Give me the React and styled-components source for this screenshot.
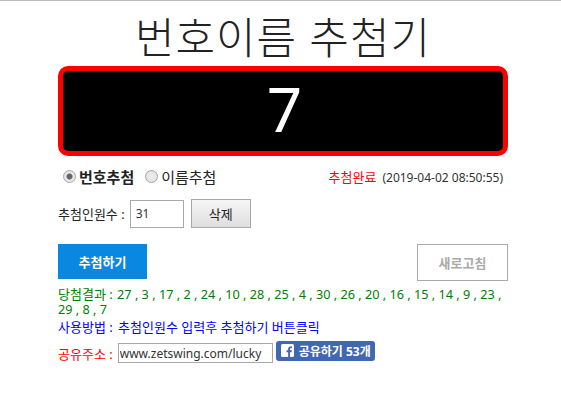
import React from "react";
import styled, { createGlobalStyle } from "styled-components";

const GlobalStyle = createGlobalStyle`
  html, body {
    margin: 0;
    padding: 0;
    background: #fff;
    font-family: "Noto Sans", "Noto Sans CJK KR", sans-serif;
  }
`;

const Page = styled.div`
  border-top: 1px solid #bbb;
  height: 414px;
  width: 561px;
  box-sizing: border-box;
`;

const Wrap = styled.div`
  width: 450px;
  margin-left: 58px;
  display: flex;
  flex-direction: column;
`;

const Title = styled.h1`
  margin: 9px 0 0;
  height: 56px;
  line-height: 56px;
  font-size: 43px;
  font-weight: 300;
  color: #222;
  text-align: center;
  letter-spacing: 1px;
`;

const Display = styled.div`
  box-sizing: border-box;
  height: 90px;
  border: 5px solid #f00;
  border-radius: 10px;
  background: #000;
  color: #fff;
  font-size: 62px;
  line-height: 75px;
  text-align: center;
  padding-left: 3px;
`;

const StatusRow = styled.div`
  display: flex;
  justify-content: space-between;
  align-items: center;
  height: 20px;
  margin-top: 10px;
  padding: 0 5px;
`;

const RadioGroup = styled.div`
  display: flex;
  align-items: center;
`;

const RadioLabel = styled.label`
  display: flex;
  align-items: center;
  gap: 3px;
  margin-right: 11px;
  font-size: 15px;
  color: #222;
  font-weight: ${(p) => (p.$active ? 700 : 400)};
`;

const Radio = styled.input.attrs({ type: "radio", name: "mode" })`
  appearance: none;
  box-sizing: border-box;
  width: 13px;
  height: 13px;
  margin: 0;
  border-radius: 50%;
  border: 1px solid #a6a6a6;
  background: radial-gradient(circle, #eee 0, #ddd 100%);
  &:checked {
    background: radial-gradient(circle, #666 0, #666 2.5px, #e8e8e8 3.5px);
  }
`;

const Status = styled.div`
  font-size: 12px;
  color: #333;
`;

const Done = styled.span`
  font-size: 13px;
  color: #f00;
  margin-right: 6px;
`;

const CountRow = styled.div`
  display: flex;
  align-items: center;
  margin-top: 13px;
  font-size: 13px;
  color: #222;
`;

const CountInput = styled.input`
  box-sizing: border-box;
  width: 54px;
  height: 28px;
  margin-left: 5px;
  padding: 0 5px;
  border: 1px solid #a9a9a9;
  font: inherit;
  font-size: 12px;
  color: #333;
  outline: none;
`;

const DeleteButton = styled.button`
  box-sizing: border-box;
  width: 60px;
  height: 29px;
  margin-left: 7px;
  border: 1px solid #a9a9a9;
  background: linear-gradient(#f6f6f6, #dedede);
  font: inherit;
  color: #222;
  padding: 0;
`;

const ActionRow = styled.div`
  display: flex;
  justify-content: space-between;
  margin-top: 16px;
`;

const DrawButton = styled.button`
  width: 89px;
  height: 35px;
  border: 0;
  padding: 0;
  background: #0a87e0;
  color: #fff;
  font: inherit;
  font-size: 13px;
  font-weight: 700;
`;

const RefreshButton = styled.button`
  box-sizing: border-box;
  width: 91px;
  height: 37px;
  border: 1px solid #aaa;
  padding: 0;
  background: #fff;
  color: #aaa;
  font: inherit;
  font-size: 13px;
  font-weight: 700;
`;

const InfoLine = styled.p`
  margin: ${(p) => p.$top || 0}px 0 0;
  font-size: 13px;
  line-height: 15px;
  color: ${(p) => p.$color};
`;

const InfoLabel = styled.span`
  margin-right: ${(p) => p.$gap}px;
`;

const Numbers = styled.span`
  font-size: 12.7px;
`;

const ShareRow = styled.div`
  display: flex;
  align-items: center;
  margin-top: 8px;
  font-size: 13px;
  color: #f00;
`;

const ShareInput = styled.input`
  box-sizing: border-box;
  width: 155px;
  height: 20px;
  margin-left: 5px;
  padding: 0 1px;
  border: 1px solid #a9a9a9;
  font: inherit;
  font-size: 12px;
  color: #333;
  outline: none;
`;

const ShareButton = styled.a`
  display: flex;
  align-items: center;
  gap: 5px;
  box-sizing: border-box;
  width: 99px;
  height: 20px;
  margin: -5px 0 0 3px;
  padding-left: 5px;
  border-radius: 3px;
  background: #4267b2;
  color: #fff;
  font-size: 12px;
  font-weight: 700;
  white-space: nowrap;
`;

const FbIcon = () => (
  <svg width="13" height="13" viewBox="0 0 13 13">
    <rect width="13" height="13" rx="1.5" fill="#fff" />
    <path
      d="M9 13V8.2h1.6l.25-1.9H9V5.1c0-.55.15-.9.95-.9h1V2.5c-.2 0-.75-.07-1.4-.07-1.4 0-2.4.85-2.4 2.45v1.4H5.5v1.9h1.65V13z"
      fill="#4267b2"
    />
  </svg>
);

export default function App() {
  return (
    <Page>
      <GlobalStyle />
      <Wrap>
        <Title>번호이름 추첨기</Title>
        <Display>7</Display>
        <StatusRow>
          <RadioGroup>
            <RadioLabel $active>
              <Radio defaultChecked />
              번호추첨
            </RadioLabel>
            <RadioLabel>
              <Radio />
              이름추첨
            </RadioLabel>
          </RadioGroup>
          <Status>
            <Done>추첨완료</Done>(2019-04-02 08:50:55)
          </Status>
        </StatusRow>
        <CountRow>
          추첨인원수 :
          <CountInput defaultValue="31" />
          <DeleteButton>삭제</DeleteButton>
        </CountRow>
        <ActionRow>
          <DrawButton>추첨하기</DrawButton>
          <RefreshButton>새로고침</RefreshButton>
        </ActionRow>
        <InfoLine $color="#008000" $top={6}>
          <InfoLabel $gap={1}>당첨결과 :</InfoLabel>{" "}
          <Numbers>27 , 3 , 17 , 2 , 24 , 10 , 28 , 25 , 4 , 30 , 26 , 20 , 16 , 15 , 14 , 9 , 23 , 29 , 8 , 7</Numbers>
        </InfoLine>
        <InfoLine $color="#0000ff" $top={3}>
          <InfoLabel $gap={2}>사용방법 :</InfoLabel> 추첨인원수 입력후 추첨하기 버튼클릭
        </InfoLine>
        <ShareRow>
          공유주소 :
          <ShareInput defaultValue="www.zetswing.com/lucky" />
          <ShareButton>
            <FbIcon />
            공유하기 53개
          </ShareButton>
        </ShareRow>
      </Wrap>
    </Page>
  );
}
